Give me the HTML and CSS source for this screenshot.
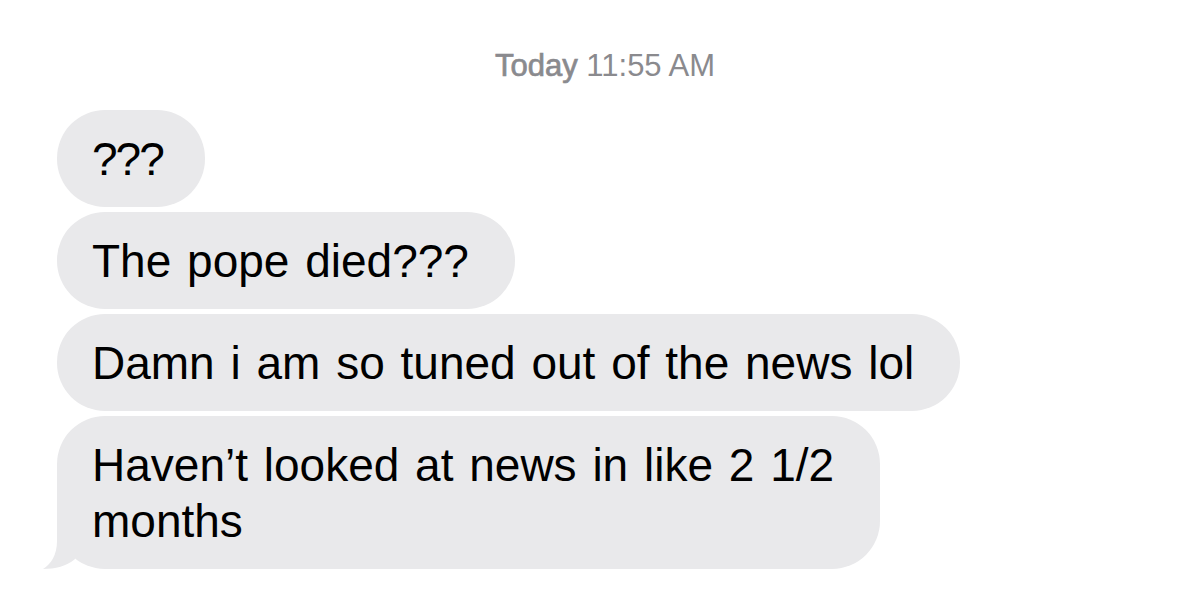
FILE: index.html
```html
<!DOCTYPE html>
<html lang="en">
<head>
<meta charset="utf-8">
<title>Messages</title>
<link rel="stylesheet" href="styles.css">
</head>
<body>
<div class="screen">
  <div class="stamp"><span class="day">Today</span> 11:55 AM</div>
  <div class="thread">
    <div class="bubble tight">???</div>
    <div class="bubble">The pope died???</div>
    <div class="bubble">Damn i am so tuned out of the news lol</div>
    <div class="bubble last">Haven’t looked at news in like 2 1/2<br>months
      <svg class="tail" width="40" height="50" viewBox="0 0 40 50" aria-hidden="true"><path d="M14 0 L14 22 C14 36 8 45 0 50 C12 50 24 47 32 40 L32 0 Z"/></svg>
    </div>
  </div>
</div>
</body>
</html>
```
FILE: styles.css
```css
html, body {
  margin: 0;
  background: #ffffff;
}
body {
  font-family: "Liberation Sans", Arial, sans-serif;
  color: #000;
}
.screen {
  width: 1200px;
  height: 590px;
  overflow: hidden;
}
.stamp {
  margin-top: 47px;
  padding-left: 10px;
  text-align: center;
  font-size: 31px;
  line-height: 37px;
  color: #8a8a8e;
}
.day {
  -webkit-text-stroke: 0.7px #8a8a8e;
}
.thread {
  display: flex;
  flex-direction: column;
  align-items: flex-start;
  gap: 5px;
  margin-top: 26px;
  padding-left: 57px;
}
.bubble {
  position: relative;
  background: #e9e9eb;
  border-radius: 48px;
  padding: 21px 46px 20px 35px;
  font-size: 46px;
  line-height: 56px;
  word-spacing: 3px;
  white-space: nowrap;
}
.tight {
  letter-spacing: -2px;
  padding-right: 42px;
}
.tail {
  position: absolute;
  left: -14px;
  bottom: 0;
  fill: #e9e9eb;
}
```
